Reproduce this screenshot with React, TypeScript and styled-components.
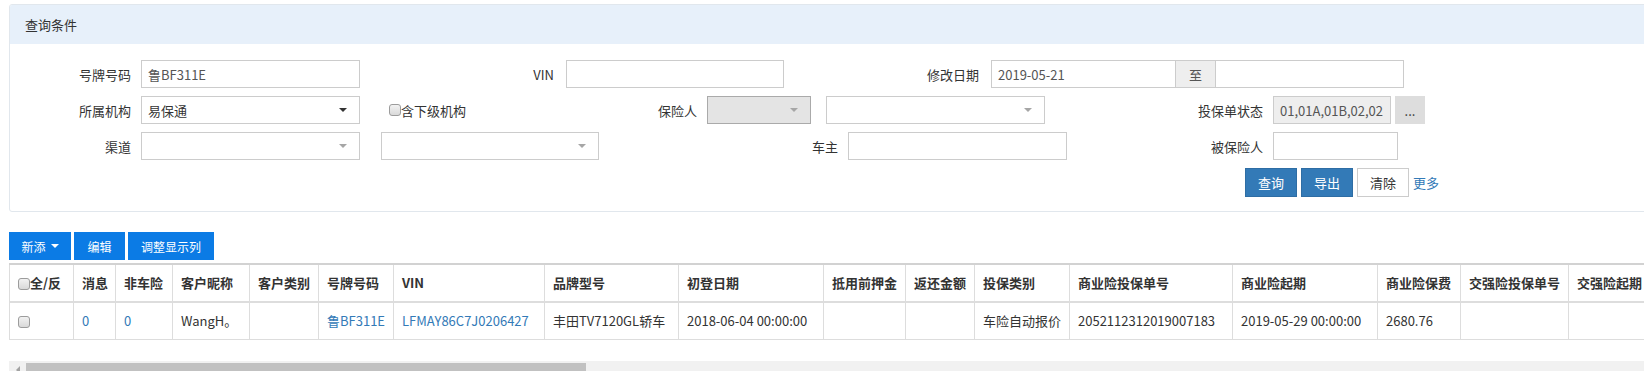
import React from "react";
import styled, { createGlobalStyle } from "styled-components";

const Global = createGlobalStyle`
  html, body { margin: 0; padding: 0; background: #fff; overflow: hidden; }
  body {
    font-family: "Noto Sans CJK SC", "Open Sans", sans-serif;
    font-size: 13px;
    color: #333;
  }
  * { box-sizing: border-box; }
`;

const Page = styled.div`
  width: 1700px;
  padding: 4px 0 0 9px;
`;

const Panel = styled.section`
  border: 1px solid #e1e7ed;
  border-radius: 3px;
  background: #fff;
  overflow: hidden;
`;

const PanelHead = styled.div`
  height: 39px;
  background: #e7f0fa;
  padding-left: 15px;
  display: flex;
  align-items: center;
  font-size: 13px;
  color: #333;
`;

const PanelBody = styled.div`
  padding: 16px 0 15px;
  display: flex;
  flex-direction: column;
  gap: 8px;
`;

const Row = styled.div<{ $ml?: number; $gap?: number }>`
  display: flex;
  align-items: center;
  height: 28px;
  padding-left: ${(p) => p.$ml ?? 0}px;
  gap: ${(p) => p.$gap ?? 0}px;
`;

const Label = styled.label<{ $w: number; $pr?: number }>`
  flex: none;
  width: ${(p) => p.$w}px;
  padding-right: ${(p) => p.$pr ?? 10}px;
  text-align: right;
  white-space: nowrap;
  color: #333;
  font-size: 13px;
`;

const Field = styled.div<{ $w: number; $ml?: number; $bg?: string; $bc?: string; $noLeft?: boolean }>`
  flex: none;
  width: ${(p) => p.$w}px;
  margin-left: ${(p) => p.$ml ?? 0}px;
  height: 28px;
  border: 1px solid ${(p) => p.$bc ?? "#ccc"};
  ${(p) => (p.$noLeft ? "border-left: none;" : "")}
  background: ${(p) => p.$bg ?? "#fff"};
  display: flex;
  align-items: center;
  padding: 0 6px;
  color: #555;
  font-size: 13px;
  white-space: nowrap;
  overflow: hidden;
`;

const Caret = styled.span<{ $dark?: boolean }>`
  margin-left: auto;
  margin-right: 6px;
  width: 0;
  height: 0;
  border-left: 4px solid transparent;
  border-right: 4px solid transparent;
  border-top: 4px solid ${(p) => (p.$dark ? "#333" : "#a6a6a6")};
`;

const DateGroup = styled.div`
  display: flex;
  flex: none;
`;

const Addon = styled.div`
  flex: none;
  width: 40px;
  height: 28px;
  border: 1px solid #ccc;
  border-left: none;
  background: #eee;
  color: #555;
  display: flex;
  align-items: center;
  justify-content: center;
`;

const DotsBtn = styled.button`
  flex: none;
  width: 30px;
  height: 28px;
  margin-left: 4px;
  border: none;
  background: #ddd;
  color: #333;
  font-family: inherit;
  font-size: 13px;
  padding: 0;
`;

const CheckCell = styled.label<{ $w: number; $pl: number }>`
  flex: none;
  width: ${(p) => p.$w}px;
  padding-left: ${(p) => p.$pl}px;
  display: flex;
  align-items: center;
  color: #333;
  white-space: nowrap;
`;

const Box = styled.span`
  display: inline-block;
  flex: none;
  width: 12px;
  height: 12px;
  border: 1px solid #9c9c9c;
  border-radius: 3px;
  background: linear-gradient(#f2f2f2, #d9d9d9);
  vertical-align: -2px;
`;

const ActionBtn = styled.button<{ $primary?: boolean }>`
  flex: none;
  width: 52px;
  height: 29px;
  padding: 0;
  font-family: inherit;
  font-size: 13px;
  border: 1px solid ${(p) => (p.$primary ? "#2e6da4" : "#ccc")};
  background: ${(p) => (p.$primary ? "#337ab7" : "#fff")};
  color: ${(p) => (p.$primary ? "#fff" : "#333")};
`;

const MoreLink = styled.a`
  color: #337ab7;
  font-size: 13px;
  text-decoration: none;
`;

const Toolbar = styled.div`
  display: flex;
  gap: 3px;
  margin-top: 20px;
`;

const ToolBtn = styled.button<{ $w: number }>`
  width: ${(p) => p.$w}px;
  height: 28px;
  padding: 0;
  border: none;
  background: #0b7be5;
  color: #fff;
  font-family: inherit;
  font-size: 12px;
  display: flex;
  align-items: center;
  justify-content: center;
  gap: 5px;
`;

const WhiteCaret = styled.span`
  width: 0;
  height: 0;
  border-left: 4px solid transparent;
  border-right: 4px solid transparent;
  border-top: 4px solid #fff;
`;

const TableWrap = styled.div`
  margin-top: 3px;
  overflow: hidden;
`;

const Table = styled.table<{ $w: number }>`
  width: ${(p) => p.$w}px;
  table-layout: fixed;
  border-collapse: collapse;
  font-size: 13px;
`;

const Col = styled.col<{ $w: number }>`
  width: ${(p) => p.$w}px;
`;

const Th = styled.th`
  padding: 8px;
  line-height: 20px;
  text-align: left;
  vertical-align: bottom;
  font-weight: bold;
  color: #333;
  white-space: nowrap;
  border: 1px solid #ddd;
  border-top: 2px solid #d2d2d2;
  border-bottom: 2px solid #ddd;
  overflow: hidden;
`;

const Td = styled.td<{ $link?: boolean }>`
  height: 37px;
  padding: 8px;
  line-height: 20px;
  color: ${(p) => (p.$link ? "#337ab7" : "#333")};
  white-space: nowrap;
  border: 1px solid #ddd;
  vertical-align: middle;
  overflow: hidden;
`;

const ScrollTrack = styled.div<{ $w: number }>`
  margin-top: 21px;
  width: ${(p) => p.$w}px;
  height: 17px;
  background: #f1f1f1;
  display: flex;
  align-items: stretch;
`;

const ScrollArrow = styled.div`
  flex: none;
  width: 17px;
  display: flex;
  align-items: center;
  justify-content: center;
  &::before {
    content: "";
    width: 0;
    height: 0;
    border-top: 4px solid transparent;
    border-bottom: 4px solid transparent;
    border-right: 4px solid #a3a3a3;
  }
`;

const ScrollThumb = styled.div<{ $w: number }>`
  flex: none;
  width: ${(p) => p.$w}px;
  margin: 2px 0;
  background: #c1c1c1;
`;

const columns: { title: string; w: number; check?: boolean }[] = [
  { title: "全/反", w: 64, check: true },
  { title: "消息", w: 42 },
  { title: "非车险", w: 57 },
  { title: "客户昵称", w: 77 },
  { title: "客户类别", w: 69 },
  { title: "号牌号码", w: 75 },
  { title: "VIN", w: 151 },
  { title: "品牌型号", w: 134 },
  { title: "初登日期", w: 145 },
  { title: "抵用前押金", w: 82 },
  { title: "返还金额", w: 69 },
  { title: "投保类别", w: 95 },
  { title: "商业险投保单号", w: 163 },
  { title: "商业险起期", w: 145 },
  { title: "商业险保费", w: 83 },
  { title: "交强险投保单号", w: 108 },
  { title: "交强险起期", w: 92 },
];

const row: { v: string; link?: boolean; check?: boolean }[] = [
  { v: "", check: true },
  { v: "0", link: true },
  { v: "0", link: true },
  { v: "WangH。" },
  { v: "" },
  { v: "鲁BF311E", link: true },
  { v: "LFMAY86C7J0206427", link: true },
  { v: "丰田TV7120GL轿车" },
  { v: "2018-06-04 00:00:00" },
  { v: "" },
  { v: "" },
  { v: "车险自动报价" },
  { v: "205211231201900718 3".replace(" ", "") },
  { v: "2019-05-29 00:00:00" },
  { v: "2680.76" },
  { v: "" },
  { v: "" },
];

const tableWidth = columns.reduce((s, c) => s + c.w, 0);

export default function App() {
  return (
    <>
      <Global />
      <Page>
        <Panel>
          <PanelHead>查询条件</PanelHead>
          <PanelBody>
            <Row>
              <Label $w={131}>号牌号码</Label>
              <Field $w={219}>鲁BF311E</Field>
              <Label $w={206} $pr={12}>VIN</Label>
              <Field $w={218} />
              <Label $w={207} $pr={12}>修改日期</Label>
              <DateGroup>
                <Field $w={185}>2019-05-21</Field>
                <Addon>至</Addon>
                <Field $w={188} $noLeft />
              </DateGroup>
            </Row>
            <Row>
              <Label $w={131}>所属机构</Label>
              <Field $w={219} style={{ color: "#333" }}>
                易保通
                <Caret $dark />
              </Field>
              <CheckCell $w={260} $pl={29}>
                <Box />
                含下级机构
              </CheckCell>
              <Label $w={87}>保险人</Label>
              <Field $w={104} $bg="#e4e4e4" $bc="#aaa">
                <Caret />
              </Field>
              <Field $w={219} $ml={15}>
                <Caret />
              </Field>
              <Label $w={228}>投保单状态</Label>
              <Field $w={118} $bg="#eee">01,01A,01B,02,02</Field>
              <DotsBtn>...</DotsBtn>
            </Row>
            <Row>
              <Label $w={131}>渠道</Label>
              <Field $w={219}>
                <Caret />
              </Field>
              <Field $w={218} $ml={21}>
                <Caret />
              </Field>
              <Label $w={249}>车主</Label>
              <Field $w={219} />
              <Label $w={206}>被保险人</Label>
              <Field $w={125} />
            </Row>
            <Row $ml={1235} $gap={4}>
              <ActionBtn $primary>查询</ActionBtn>
              <ActionBtn $primary>导出</ActionBtn>
              <ActionBtn>清除</ActionBtn>
              <MoreLink href="#">更多</MoreLink>
            </Row>
          </PanelBody>
        </Panel>

        <Toolbar>
          <ToolBtn $w={62}>
            新添
            <WhiteCaret />
          </ToolBtn>
          <ToolBtn $w={51}>编辑</ToolBtn>
          <ToolBtn $w={86}>调整显示列</ToolBtn>
        </Toolbar>

        <TableWrap>
          <Table $w={tableWidth}>
            <colgroup>
              {columns.map((c) => (
                <Col key={c.title} $w={c.w} />
              ))}
            </colgroup>
            <thead>
              <tr>
                {columns.map((c) => (
                  <Th key={c.title}>
                    {c.check && <Box />}
                    {c.title}
                  </Th>
                ))}
              </tr>
            </thead>
            <tbody>
              <tr>
                {row.map((c, i) => (
                  <Td key={i} $link={c.link}>
                    {c.check ? <Box /> : c.v}
                  </Td>
                ))}
              </tr>
            </tbody>
          </Table>
        </TableWrap>

        <ScrollTrack $w={tableWidth}>
          <ScrollArrow />
          <ScrollThumb $w={560} />
        </ScrollTrack>
      </Page>
    </>
  );
}
